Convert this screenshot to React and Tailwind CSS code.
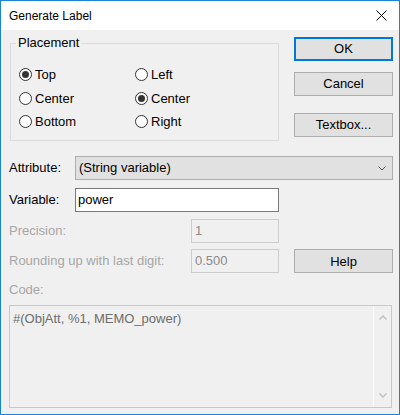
import React from 'react';

const font = { fontFamily: '"Liberation Sans", Arial, sans-serif' };

const Radio = ({ label, checked }) => (
    <div className="flex items-center gap-[3px] h-[23.5px]">
        <span className="w-[13px] h-[13px] rounded-full border border-[#333333] bg-white flex items-center justify-center">
            {checked && <span className="w-[7px] h-[7px] rounded-full bg-[#333333]" />}
        </span>
        <span className="text-[13px] text-black">{label}</span>
    </div>
);

const Button = ({ children, primary }) => (
    <button
        className={
            primary
                ? 'w-[99px] h-[24px] border-2 border-[#0078d7] bg-[#e1e1e1] text-[13px] font-normal text-black'
                : 'w-[99px] h-[24px] border border-[#adadad] bg-[#e1e1e1] text-[13px] font-normal text-black'
        }
    >
        {children}
    </button>
);

const App = () => {
    return (
        <div style={font} className="w-[400px] h-[415px] border border-[#1883d7] bg-[#f0f0f0] flex flex-col select-none">
            {/* title bar */}
            <div className="h-[29px] bg-white flex items-center justify-between pl-[8px] pr-[12px] shrink-0">
                <span className="text-[12px] text-black" style={{ fontFamily: '"Segoe UI", "Liberation Sans", sans-serif' }}>
                    Generate Label
                </span>
                <svg width="11" height="11" viewBox="0 0 11 11">
                    <path d="M0.5 0.5 L10.5 10.5 M10.5 0.5 L0.5 10.5" stroke="#000" strokeWidth="1" />
                </svg>
            </div>

            <div className="flex-1">
                <div className="flex items-start">
                    {/* placement group */}
                    <div className="relative ml-[9px] mt-[13px] w-[269px] h-[98px] border border-[#dcdcdc]">
                        <span className="absolute left-[5px] top-[-9px] px-[2px] bg-[#f0f0f0] text-[13px] leading-[15px] text-black">
                            Placement
                        </span>
                        <div className="grid grid-cols-[116px_1fr] pl-[8px] pt-[19px]">
                            <Radio label="Top" checked />
                            <Radio label="Left" />
                            <Radio label="Center" />
                            <Radio label="Center" checked />
                            <Radio label="Bottom" />
                            <Radio label="Right" />
                        </div>
                    </div>

                    <div className="ml-[15px] mt-[7px] flex flex-col">
                        <Button primary>OK</Button>
                        <div className="mt-[10px]">
                            <Button>Cancel</Button>
                        </div>
                        <div className="mt-[16px]">
                            <Button>Textbox...</Button>
                        </div>
                    </div>
                </div>

                {/* attribute */}
                <div className="flex items-center mt-[15px] pl-[8px] h-[24px]">
                    <span className="w-[66px] text-[13px] text-black">Attribute:</span>
                    <div className="w-[318px] h-[24px] border border-[#adadad] bg-[#e1e1e1] flex items-center justify-between pl-[3px] pr-[6px]">
                        <span className="text-[13px] text-black">(String variable)</span>
                        <svg width="8" height="5" viewBox="0 0 8 5">
                            <path d="M0.5 0.5 L4 4 L7.5 0.5" stroke="#555" strokeWidth="1" fill="none" />
                        </svg>
                    </div>
                </div>

                {/* variable */}
                <div className="flex items-center mt-[8px] pl-[8px] h-[24px]">
                    <span className="w-[66px] text-[13px] text-black">Variable:</span>
                    <div className="w-[204px] h-[24px] border border-[#7a7a7a] bg-white flex items-center pl-[2px]">
                        <span className="text-[13px] text-black">power</span>
                    </div>
                </div>

                {/* precision */}
                <div className="flex items-center mt-[7px] pl-[8px] h-[24px]">
                    <span className="w-[182px] text-[13px] text-[#a6a6a6]">Precision:</span>
                    <div className="w-[88px] h-[24px] border border-[#cccccc] bg-[#f0f0f0] flex items-center pl-[3px]">
                        <span className="text-[13px] text-[#8a8a8a]">1</span>
                    </div>
                </div>

                {/* rounding + help */}
                <div className="flex items-center mt-[6px] pl-[8px] h-[24px]">
                    <span className="w-[182px] text-[13px] text-[#a6a6a6]">Rounding up with last digit:</span>
                    <div className="w-[88px] h-[24px] border border-[#cccccc] bg-[#f0f0f0] flex items-center pl-[3px]">
                        <span className="text-[13px] text-[#8a8a8a]">0.500</span>
                    </div>
                    <div className="ml-[15px]">
                        <Button>Help</Button>
                    </div>
                </div>

                {/* code */}
                <div className="mt-[9px] pl-[8px] text-[13px] leading-[15px] text-[#a6a6a6]">Code:</div>
                <div className="mt-[8px] ml-[8px] w-[383px] h-[103px] border border-[#c8c8c8] flex">
                    <div className="flex-1 pl-[3px] pt-[3px] text-[13px] text-[#6d6d6d]">#(ObjAtt, %1, MEMO_power)</div>
                    <div className="w-[18px] border-l border-white flex flex-col items-center justify-between py-[9px]">
                        <svg width="8" height="5" viewBox="0 0 8 5">
                            <path d="M0.5 4.5 L4 1 L7.5 4.5" stroke="#c2c2c2" strokeWidth="1.5" fill="none" />
                        </svg>
                        <svg width="8" height="5" viewBox="0 0 8 5">
                            <path d="M0.5 0.5 L4 4 L7.5 0.5" stroke="#c2c2c2" strokeWidth="1.5" fill="none" />
                        </svg>
                    </div>
                </div>
            </div>
        </div>
    );
};

export default App;
